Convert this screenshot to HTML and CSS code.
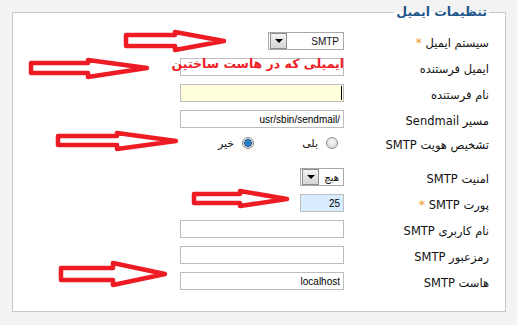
FILE: index.html
```html
<!DOCTYPE html>
<html lang="fa" dir="rtl">
<head>
    <meta charset="UTF-8">
    <meta name="viewport" content="width=device-width, initial-scale=1.0">
    <title>تنظیمات ایمیل</title>
    <link rel="stylesheet" href="styles.css">
</head>
<body>
    <div class="page">
        <fieldset class="panel">
            <legend>تنظیمات ایمیل</legend>

            <div class="row">
                <label class="label">سیستم ایمیل <span class="req">*</span></label>
                <div class="control">
                    <div class="select wide">
                        <span class="sel-val">SMTP</span>
                        <span class="sel-btn"><span class="tri"></span></span>
                    </div>
                </div>
            </div>

            <div class="row">
                <label class="label">ایمیل فرستنده</label>
                <div class="control note-wrap">
                    <input type="text" class="field">
                    <span class="note">ایمیلی که در هاست ساختین</span>
                </div>
            </div>

            <div class="row">
                <label class="label">نام فرستنده</label>
                <div class="control note-wrap">
                    <input type="text" class="field focus">
                    <span class="caret"></span>
                </div>
            </div>

            <div class="row">
                <label class="label">مسیر Sendmail</label>
                <div class="control">
                    <input type="text" class="field" value="/usr/sbin/sendmail">
                </div>
            </div>

            <div class="row radio-row">
                <label class="label">تشخیص هویت SMTP</label>
                <div class="control radios">
                    <span class="opt"><span class="radio"></span>بلی</span>
                    <span class="opt"><span class="radio on"></span>خیر</span>
                </div>
            </div>

            <div class="row">
                <label class="label">امنیت SMTP</label>
                <div class="control">
                    <div class="select narrow">
                        <span class="sel-val">هیچ</span>
                        <span class="sel-btn"><span class="tri"></span></span>
                    </div>
                </div>
            </div>

            <div class="row">
                <label class="label">پورت SMTP <span class="req">*</span></label>
                <div class="control">
                    <input type="text" class="field short blue" value="25">
                </div>
            </div>

            <div class="row">
                <label class="label">نام کاربری SMTP</label>
                <div class="control">
                    <input type="text" class="field">
                </div>
            </div>

            <div class="row">
                <label class="label">رمزعبور SMTP</label>
                <div class="control">
                    <input type="password" class="field">
                </div>
            </div>

            <div class="row">
                <label class="label">هاست SMTP</label>
                <div class="control">
                    <input type="text" class="field" value="localhost">
                </div>
            </div>
        </fieldset>

        <!-- red arrows drawn on top of the form -->
        <svg class="arrows" viewBox="0 0 517 325">
            <g fill="none" stroke="#ed1c24" stroke-width="4.5" stroke-linejoin="round">
                <path d="M126 35 H175 V32 L224 41 L175 50 V46 H126 Z"/>
                <path d="M31 63 H88 V60 L147 68 L88 77 V73 H31 Z"/>
                <path d="M58 136 H117 V133 L176 141 L117 149 V145 H58 Z"/>
                <path d="M194 194 H240 V191 L287 199 L240 206 V203 H194 Z"/>
                <path d="M61 268 H113 V263 L165 274 L113 285 V280 H61 Z"/>
            </g>
        </svg>
    </div>
</body>
</html>
```

FILE: styles.css
```css
body {
    margin: 0;
    background-color: #f3f3f3;
    font-family: "DejaVu Sans", sans-serif;
    font-size: 11px;
    color: #111;
}
.page {
    position: relative;
    height: 325px;
    overflow: hidden;
}
.panel {
    margin: 4px 11px 0 12px;
    padding: 8px 16px 17px 0;
    border: 1px solid #c8c8c8;
    background-color: #fff;
}
.panel legend {
    padding: 0 2px;
    font-size: 12.5px;
    font-weight: bold;
    line-height: 16px;
    color: #20558a;
}
.row {
    display: flex;
    align-items: center;
    height: 26px;
}
.radio-row {
    margin-top: -2px;
    margin-bottom: 8px;
}
.label {
    width: 140px;
    margin-left: 5px;
    padding-top: 3px;
    text-align: right;
    font-size: 11.5px;
}
.req {
    color: #f0a030;
    font-size: 13px;
}
.control {
    display: flex;
    align-items: center;
}
.note-wrap {
    position: relative;
}
.field {
    box-sizing: border-box;
    width: 164px;
    height: 18px;
    margin: 0;
    padding: 0 3px;
    border: 1px solid #bdbdbd;
    background-color: #fff;
    font-family: "Liberation Sans", "DejaVu Sans", sans-serif;
    font-size: 10px;
    color: #000;
    outline: none;
}
.field.focus {
    background-color: #ffffdd;
}
.field.short {
    width: 44px;
}
.field.blue {
    background-color: #d8ebff;
}
.caret {
    position: absolute;
    right: 2px;
    top: 2px;
    width: 1px;
    height: 14px;
    background-color: #000;
}
.note {
    position: absolute;
    right: 0;
    top: -2px;
    white-space: nowrap;
    font-size: 12.5px;
    font-weight: bold;
    color: #ee1c25;
}
.select {
    box-sizing: border-box;
    display: flex;
    align-items: center;
    height: 18px;
    border: 1px solid #a9a9a9;
    background-color: #fff;
}
.select.wide {
    width: 76px;
}
.select.narrow {
    width: 44px;
}
.sel-val {
    flex: 1;
    padding-right: 4px;
    font-family: "Liberation Sans", "DejaVu Sans", sans-serif;
    font-size: 10px;
}
.sel-btn {
    display: flex;
    align-items: center;
    justify-content: center;
    width: 15px;
    height: 14px;
    margin-left: 1px;
    border: 1px solid #8c8c8c;
    background: linear-gradient(#f4f4f4, #d4d4d4);
}
.tri {
    width: 0;
    height: 0;
    border-left: 4px solid transparent;
    border-right: 4px solid transparent;
    border-top: 4px solid #000;
}
.radios {
    gap: 48px;
    padding-right: 6px;
}
.opt {
    display: flex;
    align-items: center;
    gap: 8px;
}
.radio {
    box-sizing: border-box;
    width: 12px;
    height: 12px;
    border-radius: 50%;
    border: 1px solid #8e8e8e;
    background: radial-gradient(circle at 50% 40%, #fafafa, #d0d0d0);
}
.radio.on {
    background: radial-gradient(circle, #1a6fb8 0, #2f8fd6 2.5px, #0b3f75 3.5px, #e8e8e8 4px, #c8c8c8 6px);
}
.arrows {
    position: absolute;
    top: 0;
    right: 0;
    width: 517px;
    height: 325px;
    pointer-events: none;
}
```
